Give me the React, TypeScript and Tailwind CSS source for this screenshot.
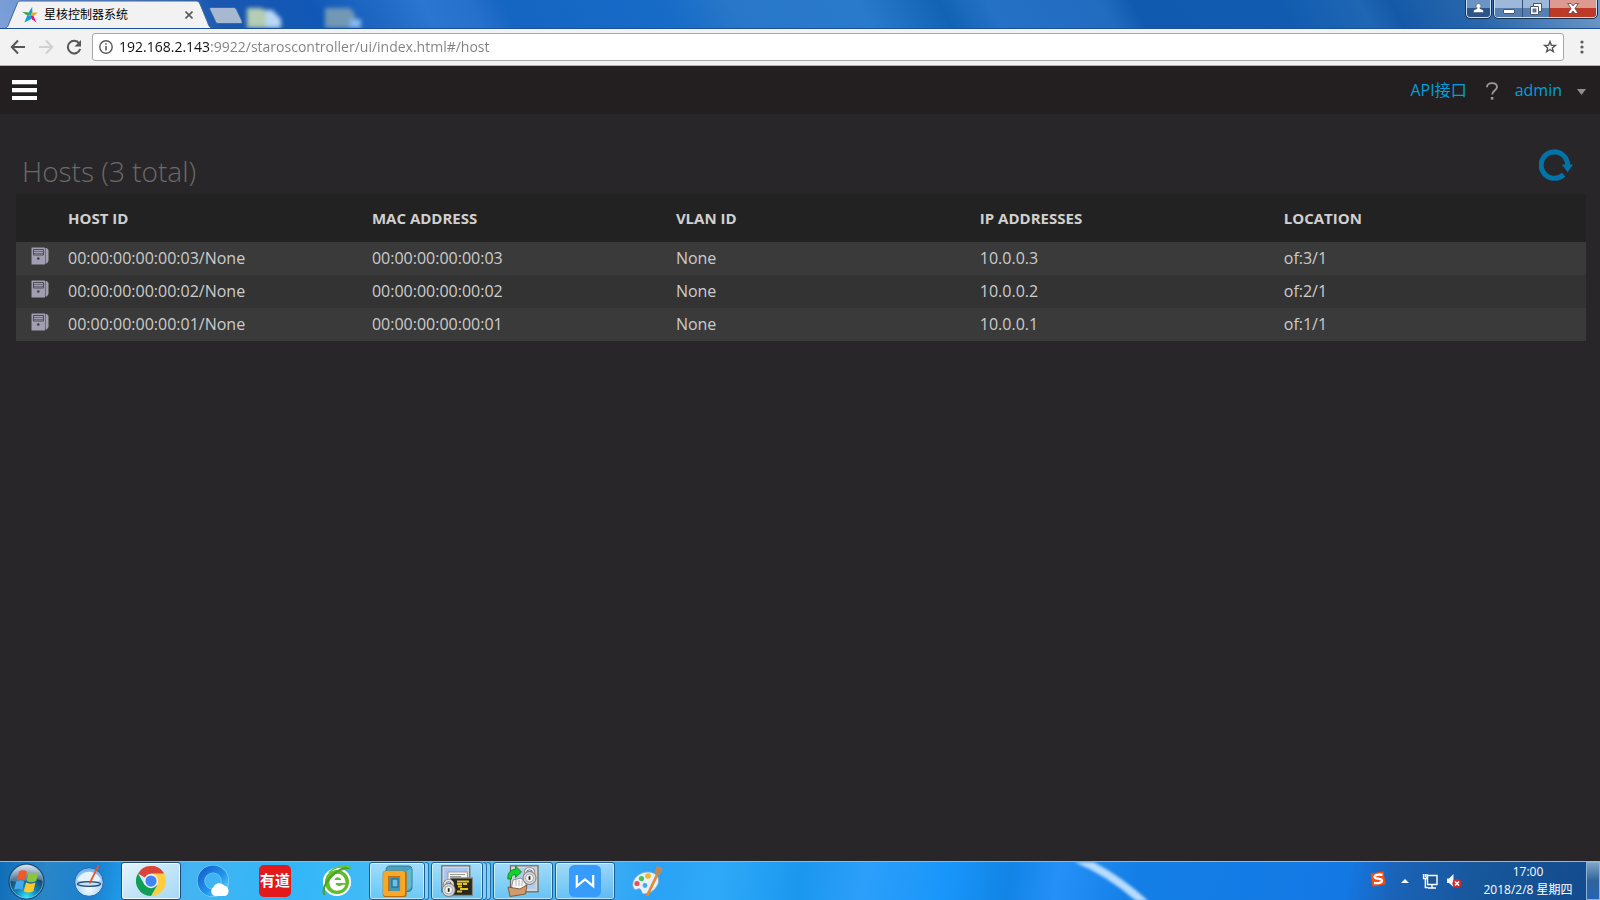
import type { ReactNode } from "react";

const hosts = [
  { id: "00:00:00:00:00:03/None", mac: "00:00:00:00:00:03", vlan: "None", ip: "10.0.0.3", location: "of:3/1" },
  { id: "00:00:00:00:00:02/None", mac: "00:00:00:00:00:02", vlan: "None", ip: "10.0.0.2", location: "of:2/1" },
  { id: "00:00:00:00:00:01/None", mac: "00:00:00:00:00:01", vlan: "None", ip: "10.0.0.1", location: "of:1/1" },
];

const columns = ["HOST ID", "MAC ADDRESS", "VLAN ID", "IP ADDRESSES", "LOCATION"];

function StarLogo() {
  return (
    <svg className="h-4 w-4" viewBox="0 0 16 16" aria-hidden="true">
      <path d="M0 4.8 6.2 5.4 8.2 8.6 5.4 8.4Z" fill="#3f9c35" />
      <path d="M10.2 0 10.4 5.4 8.2 9 6.4 5.4Z" fill="#12a5c9" />
      <path d="M15.8 5.600 10.4 5.600 8.2 8.800 11.600 9Z" fill="#f5a31a" />
      <path d="M14.400 15.400 11.600 9 8.2 8.600 10 12.2Z" fill="#e6157f" />
      <path d="M2.400 15.600 5.2 8.400 8.400 8.400 9.800 11.800Z" fill="#1b9ae0" />
    </svg>
  );
}

function TitleBar() {
  return (
    <div className="relative flex h-[29px] shrink-0 items-start justify-between overflow-hidden border-b border-[#1c4f94] bg-[linear-gradient(62deg,#7da0d8_0%,#5585cb_8%,#1a57b0_14%,#1158b6_20%,#2a76d0_27%,#2570cb_30%,#1565c2_32%,#176cc8_42%,#2877c8_46%,#2a7acb_54%,#1263b4_59%,#2471c6_62%,#226cc0_69%,#105bb0_71%,#115cb0_80%,#1f66b4_85%,#1459a8_87%,#2967ac_92%,#7099c8_100%)]">
      <svg className="absolute left-[236px] top-0 h-7 w-[140px] blur-[2px]" viewBox="0 0 140 28" aria-hidden="true">
        <path d="M26 10h10l9 9v13H26Z" fill="#b9d8f4" />
        <path d="M11 8h15l4 5v18H11Z" fill="#b4cdb4" />
        <path d="M89 8h25l5 6v17H89Z" fill="#7298b6" />
        <path d="M114 19h11v12h-11Z" fill="#86b8ee" />
      </svg>
      <div className="relative flex items-start">
        <div className="relative flex h-7 w-[212px] items-center">
          <svg className="absolute left-0 top-0 h-7 w-[212px]" viewBox="0 0 212 28" aria-hidden="true">
            <path d="M5 28.5C8 27 8 26 10 21L17 4C18 1.500 19 1 21 1H196C198 1 199 2 200 4L207 21C209 26 209 27 212 28.5Z" fill="#f2f2f2" stroke="#41679c" strokeWidth="1" />
          </svg>
          <div className="relative mt-0.5 flex w-full items-center pl-[22px]">
            <StarLogo />
            <span className="ml-1.5 text-[12px] leading-4 text-black">星核控制器系统</span>
            <button aria-label="关闭标签页" className="ml-auto mr-[15px] flex h-4 w-4 items-center justify-center">
              <svg className="h-2 w-2" viewBox="0 0 8 8" aria-hidden="true">
                <path d="M0.500 0.500 7.500 7.500M7.500 0.500 0.500 7.500" stroke="#5a5a5a" strokeWidth="1.6" />
              </svg>
            </button>
          </div>
        </div>
        <button aria-label="打开新的标签页" className="mt-[7px] h-[17px]">
          <svg className="-ml-1 h-[17px] w-[36px]" viewBox="0 0 36 17" aria-hidden="true">
            <path d="M3 .5H25.500C27 .5 28 1.500 28.500 2.500L34 14C34.500 15.500 34 16.500 33 16.500H10C8.500 16.500 8 15.500 7.500 14.500L1.800 2.500C1.400 1.500 2 .5 3 .5Z" fill="#a7b8d1" stroke="#3a66a5" />
          </svg>
        </button>
      </div>
      <div className="relative mr-[3px] flex gap-[3px]">
        <button aria-label="用户" className="flex h-[18px] w-[25px] items-center justify-center rounded-b-[4px] border border-t-0 border-[#cfe0f2] bg-linear-to-b from-[#6b93c4] from-45% to-[#2d5488] to-50% outline outline-[#1b2f4c]">
          <svg className="h-[11px] w-[11px]" viewBox="0 0 11 11" aria-hidden="true">
            <path d="M5.500.5a2.400 2.400 0 0 1 1.300 4.400c0 .8.500 1 1.700 1.300 1.500.4 2 1.200 2 3.300H.5c0-2.100.5-2.900 2-3.300 1.200-.3 1.700-.5 1.700-1.300A2.400 2.400 0 0 1 5.500.5Z" fill="#fff" stroke="#33496b" strokeWidth=".5" />
          </svg>
        </button>
        <div className="flex h-[18px] overflow-hidden rounded-b-[4px] border border-t-0 border-[#cfe0f2] outline outline-[#1b2f4c]">
          <button aria-label="最小化" className="flex w-[28px] items-center justify-center border-r border-[#33507a] bg-linear-to-b from-[#9db8d8] from-45% to-[#567eb0] to-50%">
            <svg className="h-4 w-3" viewBox="0 0 12 16" aria-hidden="true">
              <rect x=".5" y="8.500" width="11" height="4" rx=".5" fill="#fff" stroke="#49576d" />
            </svg>
          </button>
          <button aria-label="向下还原" className="flex w-[27px] items-center justify-center border-r border-[#33507a] bg-linear-to-b from-[#9db8d8] from-45% to-[#567eb0] to-50%">
            <svg className="h-3 w-3" viewBox="0 0 12 12" aria-hidden="true">
              <path d="M3.500.5h8v8h-3v3h-8v-8h3Z" fill="#fff" stroke="#49576d" />
              <path d="M3.500 3.500h5v5" fill="none" stroke="#49576d" />
              <rect x="3" y="6" width="3" height="3" fill="#6787b2" stroke="#49576d" strokeWidth=".8" />
            </svg>
          </button>
          <button aria-label="关闭" className="flex w-[46px] items-center justify-center bg-linear-to-b from-[#dc9a90] from-45% to-[#bd3a26] to-50%">
            <svg className="h-[11px] w-3" viewBox="0 0 12 11" aria-hidden="true">
              <path d="M.7.5H4L6 3 8 .5h3.300L8 5.500l3.300 5H8L6 8l-2 2.500H.7L4 5.500Z" fill="#fff" stroke="#584450" strokeWidth=".8" />
            </svg>
          </button>
        </div>
      </div>
    </div>
  );
}

function AddressBar() {
  return (
    <div className="flex h-[37px] shrink-0 items-center border-b border-[#b3b3b3] bg-[#f2f2f2] pl-[10px]">
      <button aria-label="后退" className="flex w-4 justify-center">
        <svg className="h-4 w-4" viewBox="0 0 16 16" aria-hidden="true">
          <path d="M8 1.500 1.800 8 8 14.500M2 8h13" fill="none" stroke="#555" strokeWidth="2" />
        </svg>
      </button>
      <button aria-label="前进" className="ml-3 flex w-4 justify-center">
        <svg className="h-4 w-4" viewBox="0 0 16 16" aria-hidden="true">
          <path d="M8 1.500 14.200 8 8 14.500M14 8H1" fill="none" stroke="#d0d0d0" strokeWidth="2" />
        </svg>
      </button>
      <button aria-label="重新加载" className="ml-3 flex w-4 justify-center">
        <svg className="h-4 w-4" viewBox="0 0 16 16" aria-hidden="true">
          <path d="M13.300 4.500A6.300 6.300 0 1 0 14.200 10" fill="none" stroke="#555" strokeWidth="2" />
          <path d="M15 1v6.500H8.500Z" fill="#555" />
        </svg>
      </button>
      <div className="ml-[10px] flex h-7 grow items-center rounded-[3px] border border-[#a9a9a9] bg-white pl-[6px] pr-[6px]">
        <svg className="h-[14px] w-[14px] shrink-0" viewBox="0 0 14 14" aria-hidden="true">
          <circle cx="7" cy="7" r="6.200" fill="none" stroke="#5a5a5a" strokeWidth="1.400" />
          <path d="M7 6v4.500M7 3.300v1.500" stroke="#5a5a5a" strokeWidth="1.600" />
        </svg>
        <input
          aria-label="地址栏"
          defaultValue="192.168.2.143:9922/staroscontroller/ui/index.html#/host"
          className="ml-1.5 h-6 min-w-0 grow bg-[linear-gradient(90deg,#111_92px,#808080_92px)] bg-clip-text text-[14px] leading-6 text-transparent outline-none"
        />
        <button aria-label="为此网页添加书签">
          <svg className="h-[14px] w-[14px]" viewBox="0 0 14 14" aria-hidden="true">
            <path d="M7 1.500 8.400 5.300l4 .1-3.100 2.500 1.100 3.900L7 9.500l-3.400 2.300 1.100-3.900L1.600 5.400l4-.1Z" fill="none" stroke="#505050" strokeWidth="1.300" />
          </svg>
        </button>
      </div>
      <button aria-label="自定义及控制" className="flex w-9 justify-center">
        <svg className="h-[14px] w-1" viewBox="0 0 4 14" aria-hidden="true">
          <circle cx="2" cy="2" r="1.600" fill="#5a5a5a" />
          <circle cx="2" cy="7" r="1.600" fill="#5a5a5a" />
          <circle cx="2" cy="12" r="1.600" fill="#5a5a5a" />
        </svg>
      </button>
    </div>
  );
}

function AppHeader() {
  return (
    <header className="flex h-12 shrink-0 items-center justify-between bg-[#231f20] pl-3 pr-[14px]">
      <button aria-label="菜单">
        <svg className="h-5 w-[25px]" viewBox="0 0 25 20" aria-hidden="true">
          <path d="M0 0h25v4H0ZM0 8h25v4H0ZM0 16h25v4H0Z" fill="#fff" />
          <path d="M0 4h25v1H0ZM0 12h25v1H0Z" fill="#5d5b5c" />
        </svg>
      </button>
      <nav className="flex items-center text-[16px] leading-6 text-[#009fdb]">
        <a href="#/api">API接口</a>
        <a href="#/help" aria-label="帮助" className="ml-[18px]">
          <svg className="mt-0.5 h-[18px] w-[14px]" viewBox="0 0 14 18" aria-hidden="true">
            <path d="M2 5.200C2 2.500 4 1.200 7 1.200s5 1.400 5 3.900c0 3.300-4.800 3.600-4.800 7.400" fill="none" stroke="#9a9a9a" strokeWidth="1.800" />
            <rect x="5.800" y="15" width="2.600" height="2.600" fill="#9a9a9a" />
          </svg>
        </a>
        <button className="ml-4 flex items-center">
          admin
          <svg className="ml-[15px] mt-[3px] h-[6px] w-[9px]" viewBox="0 0 9 6" aria-hidden="true">
            <path d="M0 0h9L4.500 6Z" fill="#8f8f8f" />
          </svg>
        </button>
      </nav>
    </header>
  );
}

function HostIcon() {
  return (
    <svg className="h-[18px] w-[18px]" viewBox="0 0 18 18" aria-hidden="true">
      <path d="M14.500 1h1.300L17.500 3v11l-1.700 2.500h-1.300Z" fill="#a19fb0" />
      <rect x=".5" y=".5" width="13.500" height="17" rx=".5" fill="#a09eb0" />
      <path d="M2.500 2.500h10v5.500h-10Z" fill="none" stroke="#4c4b55" strokeWidth="1" />
      <path d="M3 4.500h9M3 6.500h9" stroke="#5e5d68" strokeWidth=".8" />
      <circle cx="7.300" cy="11.500" r="1.200" fill="#3a3940" />
    </svg>
  );
}

function HostView() {
  return (
    <main className="grow bg-[#282629] pb-8 pl-4 pr-[14px] pt-[34px]">
      <div className="flex h-[46px] items-start justify-between pl-[6px] pr-[13px]">
        <h2 className="text-[28px] font-light leading-[46px] text-[#6c6a67]">Hosts (3 total)</h2>
        <button aria-label="刷新">
          <svg className="h-[34px] w-[34px]" viewBox="0 0 34 34" aria-hidden="true">
            <path d="M24.600 26.600A13.200 13.200 0 1 1 28.600 17.500" fill="none" stroke="#0073a8" strokeWidth="5" />
            <path d="M22.800 16.400H34L28.700 24.300Z" fill="#0073a8" />
          </svg>
        </button>
      </div>
      <table className="w-full table-fixed border-collapse text-[16px] leading-[22px] text-[#ccc]">
        <colgroup>
          <col className="w-[42px]" />
          <col className="w-[19.36%]" />
          <col className="w-[19.36%]" />
          <col className="w-[19.36%]" />
          <col className="w-[19.36%]" />
          <col />
        </colgroup>
        <thead>
          <tr className="h-12 bg-[#222]">
            <td />
            {columns.map((name) => (
              <th key={name} scope="col" className="px-[10px] text-left text-[15px] font-bold text-[#d0d0d0]">
                {name}
              </th>
            ))}
          </tr>
        </thead>
        <tbody>
          {hosts.map((host) => (
            <tr key={host.id} className="h-[33px] bg-[#3a3a3a] even:bg-[#333]">
              <td className="pl-[15px] pt-[5px] align-top">
                <HostIcon />
              </td>
              <td className="px-[10px] pb-0.5">{host.id}</td>
              <td className="px-[10px] pb-0.5">{host.mac}</td>
              <td className="px-[10px] pb-0.5">{host.vlan}</td>
              <td className="px-[10px] pb-0.5">{host.ip}</td>
              <td className="px-[10px] pb-0.5">{host.location}</td>
            </tr>
          ))}
        </tbody>
      </table>
    </main>
  );
}

function StartOrb() {
  return (
    <svg className="h-[37px] w-[37px]" viewBox="0 0 37 37" aria-hidden="true">
      <defs>
        <radialGradient id="orb" cx="50%" cy="95%" r="85%">
          <stop offset="0" stopColor="#35e6ff" />
          <stop offset=".35" stopColor="#1288bd" />
          <stop offset=".75" stopColor="#16466f" />
          <stop offset="1" stopColor="#5a7f9e" />
        </radialGradient>
        <linearGradient id="orbShine" x2="0" y2="1">
          <stop offset="0" stopColor="#fff" stopOpacity=".75" />
          <stop offset="1" stopColor="#cfe0ee" stopOpacity=".25" />
        </linearGradient>
      </defs>
      <circle cx="18.500" cy="18.500" r="17.500" fill="url(#orb)" stroke="#0c3d63" />
      <circle cx="18.500" cy="18.500" r="16.500" fill="none" stroke="#9ecbe6" strokeOpacity=".6" />
      <path d="M2.500 18A16 16 0 0 1 34.500 18C26 13 14 21 2.500 18Z" fill="url(#orbShine)" />
      <path d="M11 8.500c3-1.600 5.500-1.600 8 0l-2 8.500c-2.500-1.500-5-1.500-8.200 0Z" fill="#f0592a" />
      <path d="M20.500 9.500c3 1.500 6 1.500 10-.5l-2.300 9c-3 1.600-6.500 1.600-9.500 0Z" fill="#8cc63e" />
      <path d="M8.200 18.500c3-1.500 5.500-1.500 8 0l-2 8.300c-2.500-1.500-5-1.500-8 0Z" fill="#47a9ea" />
      <path d="M18 19.500c3 1.500 6.500 1.500 9.500 0l-2.200 8.700c-3 1.600-6.500 1.600-9.500 0Z" fill="#ffc928" />
    </svg>
  );
}

function NeedleIcon() {
  return (
    <svg className="h-8 w-8" viewBox="0 0 32 32" aria-hidden="true">
      <defs>
        <radialGradient id="ball" cx="50%" cy="75%" r="70%">
          <stop offset="0" stopColor="#f3fbff" />
          <stop offset=".6" stopColor="#b4dcf8" />
          <stop offset="1" stopColor="#6fb2ea" />
        </radialGradient>
      </defs>
      <circle cx="16" cy="17" r="14.300" fill="url(#ball)" stroke="#2a5fa8" strokeWidth=".9" />
      <path d="M4 15C9 4 23 4 28 15 22 18 10 18 4 15Z" fill="#e4f3fd" />
      <ellipse cx="16" cy="19" rx="11.500" ry="2.400" fill="#c4e2f7" stroke="#1d3f74" strokeWidth="1.200" />
      <path d="M16.500 18.500 25.800 0" stroke="#e8552a" strokeWidth="1.700" />
    </svg>
  );
}

function ChromeIcon() {
  return (
    <svg className="h-[30px] w-[30px]" viewBox="0 0 48 48" aria-hidden="true">
      <path d="M24 24 3.200 12A24 24 0 0 1 44.800 12Z" fill="#db4437" />
      <path d="M24 0A24 24 0 0 1 44.800 12H24Z" fill="#db4437" />
      <path d="M24 12H44.800A24 24 0 0 1 24 48L34.400 30Z" fill="#ffcd40" />
      <path d="M3.200 12A24 24 0 0 0 24 48L34.400 30 13.600 30Z" fill="#0f9d58" />
      <circle cx="24" cy="24" r="11.500" fill="#f1f1f1" />
      <circle cx="24" cy="24" r="9" fill="#4285f4" />
    </svg>
  );
}

function QQBrowserIcon() {
  return (
    <svg className="h-8 w-8" viewBox="0 0 32 32" aria-hidden="true">
      <defs>
        <linearGradient id="ring" x2="1" y2="1">
          <stop offset="0" stopColor="#1462cc" />
          <stop offset=".6" stopColor="#2196ee" />
          <stop offset="1" stopColor="#5fd0ff" />
        </linearGradient>
      </defs>
      <circle cx="16" cy="16" r="12" fill="none" stroke="#8fd6fa" strokeWidth="8" />
      <circle cx="16" cy="16" r="12" fill="none" stroke="url(#ring)" strokeWidth="6.800" />
      <path d="M18 31a5 5 0 0 1-1.500-9 6.500 6.500 0 0 1 10.800-1.500A5.500 5.500 0 0 1 28 31Z" fill="#fff" />
    </svg>
  );
}

function BrowserEIcon() {
  return (
    <svg className="h-8 w-8" viewBox="0 0 32 32" aria-hidden="true">
      <circle cx="16" cy="17" r="12.800" fill="none" stroke="#fff" strokeWidth="2.600" />
      <circle cx="16" cy="17" r="12" fill="#62bd2c" />
      <path d="M8.500 18C9 5.500 24 6 24.500 18H14.500c1 4 5.500 3.500 7 1.800h3C22 28 9 28 8.500 18Z" fill="#fff" />
      <path d="M13.500 15c.6-3.600 6-3.600 6.600 0Z" fill="#62bd2c" />
      <path d="M3.500 30C-1 20 15 2 29.500 3" fill="none" stroke="#4ba326" strokeWidth="2.200" />
      <path d="M29.500 3C25-.5 14 1 8 8" fill="none" stroke="#6ac72f" strokeWidth="1.600" />
    </svg>
  );
}

function VmIcon() {
  return (
    <svg className="h-8 w-8" viewBox="0 0 32 32" aria-hidden="true">
      <defs>
        <linearGradient id="vmBack" x2="1" y2="1">
          <stop offset="0" stopColor="#4fa3b8" />
          <stop offset="1" stopColor="#3a9fc4" />
        </linearGradient>
      </defs>
      <path d="M9 1h18.500C30 1 31 2.500 31 5v17.500c0 2.500-1.500 4-4 4H8C6 26.500 5 25 5 23V5c0-2.500 1.500-4 4-4Z" fill="url(#vmBack)" stroke="#2a7890" />
      <path d="M22 8.500 30.500 3v19L22 29Z" fill="#5bb9d2" />
      <path d="M5 9h17.500v20H5Z" fill="none" stroke="#b96d10" strokeWidth="6.600" strokeLinejoin="round" />
      <path d="M4.600 9h17v20h-17Z" fill="none" stroke="#f7a826" strokeWidth="5" strokeLinejoin="round" transform="translate(0 -.4)" />
      <rect x="8" y="12" width="10.500" height="13.500" fill="#3f97bd" />
      <rect x="11" y="14" width="6" height="8" fill="#6fc0e0" stroke="#226c92" strokeWidth="1.200" />
    </svg>
  );
}

function Padlock() {
  return (
    <>
      <path d="M3.500 8V5.500a4 4 0 0 1 8 0V8" fill="none" stroke="#666" strokeWidth="3.200" />
      <path d="M3.500 8V5.500a4 4 0 0 1 8 0V8" fill="none" stroke="#e4e4e4" strokeWidth="2" />
      <circle cx="7.500" cy="11" r="6.500" fill="#d4d6d6" stroke="#666" strokeWidth=".8" />
      <circle cx="7.500" cy="11" r="4" fill="#f2f2f2" stroke="#999" strokeWidth=".8" />
      <path d="M7.500 9.200v3.600" stroke="#222" strokeWidth="1.800" />
    </>
  );
}

function TerminalIcon() {
  return (
    <svg className="h-8 w-8" viewBox="0 0 32 32" aria-hidden="true">
      <rect x=".8" y=".8" width="28" height="26" fill="#d9d5cf" stroke="#6b6661" strokeWidth="1.200" />
      <rect x="3" y="3" width="23.500" height="21" fill="#a9c6f3" />
      <rect x="7" y="7" width="19.500" height="9" fill="#f5f5f2" stroke="#8d8d8d" strokeWidth=".8" />
      <path d="M9 9.500h15M9 11.500h11" stroke="#9a9a9a" />
      <rect x="9.600" y="13" width="22" height="17.500" fill="#27271f" stroke="#8a867c" strokeWidth="1.400" />
      <path d="M16 16.500h12M16 19h5M22 19h4M17 21.500h4M19 24h8M16 26.500h5" stroke="#e8c51c" strokeWidth="1.800" />
      <g transform="translate(.2 14)">
        <Padlock />
      </g>
    </svg>
  );
}

function TransferIcon() {
  return (
    <svg className="h-8 w-8" viewBox="0 0 32 32" aria-hidden="true">
      <rect x="3.500" y=".8" width="27.500" height="26" fill="#d9d5cf" stroke="#6b6661" strokeWidth="1.200" />
      <rect x="6" y="3" width="22.500" height="21" fill="#b3caf0" />
      <g transform="translate(15 2)">
        <Padlock />
      </g>
      <path d="M.8 14C.5 7 4 4.500 8.500 4.500V1l6 6-6 5.500V9.500C5.500 9.500 4 11 4.500 14Z" fill="#14d12c" stroke="#0a7d18" strokeWidth=".8" />
      <path d="M6 15 14 13l5 6v6H4Z" fill="#f7f7f7" stroke="#777" strokeWidth=".8" />
      <path d="M9 15v6M12 15v6M15 16v5" stroke="#aaa" strokeWidth=".8" />
      <path d="M1 22 13 24l7-4-1.500 9-15.500 2.500Z" fill="#d09a6a" stroke="#7a5030" strokeWidth=".9" />
    </svg>
  );
}

function WpsIcon() {
  return (
    <svg className="h-8 w-8" viewBox="0 0 32 32" aria-hidden="true">
      <rect width="32" height="32" rx="5.500" fill="#379bfb" />
      <path d="M7.800 10v11.200L16 14.500l8.200 6.700V10" fill="none" stroke="#fff" strokeWidth="2.200" />
    </svg>
  );
}

function PaintIcon() {
  return (
    <svg className="h-8 w-8" viewBox="0 0 32 32" aria-hidden="true">
      <path d="M3 24C-2 16 8 6 18 7c9 .5 12 8 8 14-3 5-7 7-12 8-4 .5-3-4-5-5s-4 2-6 0Z" fill="#e7f1fa" stroke="#7da9cf" />
      <circle cx="6" cy="18.500" r="2.600" fill="#ee4e57" />
      <circle cx="10.500" cy="13.500" r="2.600" fill="#4bbf5c" />
      <circle cx="17" cy="11" r="2.800" fill="#f5b52c" />
      <circle cx="14" cy="20.500" r="2.400" fill="#47a9ea" />
      <path d="M16 31 26.500 9" stroke="#e48a32" strokeWidth="2.800" />
      <path d="M24 9C22.500 5 26 4 25 1c3 1.500 6.500 0 6.500 2.500S29.500 9 27.500 10.500Z" fill="#b98a5d" />
    </svg>
  );
}

function YoudaoIcon() {
  return (
    <span className="flex h-8 w-8 items-center justify-center rounded-[5px] bg-[#e3191b] pb-0.5 text-[15px] font-bold leading-[30px] text-white">
      有道
    </span>
  );
}

type TaskState = "idle" | "open" | "active";

function TaskButton({ label, state = "idle", windows = 1, children }: { label: string; state?: TaskState; windows?: number; children: ReactNode }) {
  const frame = {
    idle: "",
    open: "border border-[#1f5d92] bg-linear-to-b from-[#ffffff80] to-[#ffffff2e] shadow-[inset_0_0_0_1px_#ffffff8c]",
    active: "border border-[#1f4d78] bg-linear-to-br from-[#e6f5fd] via-[#c3e5f7] to-[#a5d8f4] shadow-[inset_0_0_0_1px_#ffffffcc]",
  };
  return (
    <button aria-label={label} className="flex h-[38px] w-[60px] items-stretch">
      <span className={`flex grow items-center justify-center rounded-[3px] ${frame[state]}`}>{children}</span>
      {windows > 1 && <span className="w-1 rounded-r-[3px] border border-l-0 border-[#2a6ea6] bg-[#ffffff4d]" />}
      {windows > 2 && <span className="w-1 rounded-r-[3px] border border-l-0 border-[#2a6ea6] bg-[#ffffff4d]" />}
    </button>
  );
}

function Taskbar() {
  return (
    <footer className="relative flex h-[39px] shrink-0 items-stretch overflow-hidden border-t border-[#8fb9da] bg-[linear-gradient(100deg,#0f6db8_0%,#2a86c8_3%,#1a80cc_6%,#1f9cec_8%,#45b4f2_12%,#31b6f8_18%,#4abdf5_26%,#45b4f0_36%,#2aa2f6_41%,#2ea9f8_45%,#1b97ef_50%,#2c9ffa_54%,#1996fb_59%,#1284e6_63%,#2490f8_66%,#137fe6_71%,#1478e4_84%,#1a63b8_87%,#17579c_92%,#134a8c_100%)]">
      <svg className="absolute left-[66%] top-0 h-[39px] w-[110px] blur-[1.5px]" viewBox="0 0 110 39" aria-hidden="true">
        <path d="M14-6C44 5 68 22 92 44" fill="none" stroke="#b8dcff" strokeWidth="8" />
      </svg>
      <div className="relative flex grow items-start">
        <button aria-label="开始" className="flex h-[38px] w-[53px] items-center justify-center">
          <StartOrb />
        </button>
        <div className="ml-[6px] flex gap-0.5">
          <TaskButton label="截图工具"><NeedleIcon /></TaskButton>
          <TaskButton label="Google Chrome" state="active"><ChromeIcon /></TaskButton>
          <TaskButton label="QQ浏览器"><QQBrowserIcon /></TaskButton>
          <TaskButton label="有道"><YoudaoIcon /></TaskButton>
          <TaskButton label="浏览器"><BrowserEIcon /></TaskButton>
          <TaskButton label="虚拟机" state="open" windows={2}><VmIcon /></TaskButton>
          <TaskButton label="终端" state="open" windows={3}><TerminalIcon /></TaskButton>
          <TaskButton label="文件传输" state="open"><TransferIcon /></TaskButton>
          <TaskButton label="WPS" state="open"><WpsIcon /></TaskButton>
          <TaskButton label="画图"><PaintIcon /></TaskButton>
        </div>
      </div>
      <div className="relative flex items-center">
        <button aria-label="输入法" className="mb-1">
          <svg className="h-4 w-4" viewBox="0 0 16 16" aria-hidden="true">
            <path d="M.5 2.500 13.500.2 15.700 13.200 2.500 15.800Z" fill="#f04e12" />
            <path d="M12.500 3.800C9 3 4.500 3.800 4.500 6c0 2.500 7.500.8 7.500 3.600 0 2.400-4.500 3-8 2.200" fill="none" stroke="#fff" strokeWidth="2.300" />
          </svg>
        </button>
        <button aria-label="显示隐藏的图标" className="ml-[15px]">
          <svg className="h-1 w-2" viewBox="0 0 8 4" aria-hidden="true">
            <path d="M0 4 4 0 8 4Z" fill="#fff" />
          </svg>
        </button>
        <button aria-label="网络" className="ml-[13px]">
          <svg className="h-4 w-4" viewBox="0 0 16 16" aria-hidden="true">
            <path d="M5.500 2.500h9.500v9H5.500Z" fill="#1c5794" stroke="#fff" strokeWidth="1.400" />
            <path d="M10 12v2.500M6 15h8" stroke="#fff" strokeWidth="1.400" />
            <path d="M1.500 1v4.500h3.500V1M3.300 1v3M3.300 5v9.500H6" fill="none" stroke="#fff" strokeWidth="1.300" />
          </svg>
        </button>
        <button aria-label="音量" className="ml-2">
          <svg className="h-4 w-4" viewBox="0 0 16 16" aria-hidden="true">
            <path d="M1 5.500h2L7.500 1v13L3 10H1Z" fill="#f2f6fa" />
            <circle cx="11" cy="10.500" r="4.600" fill="#d9262b" />
            <path d="m9 8.500 4 4m0-4-4 4" stroke="#fff" strokeWidth="1.600" />
          </svg>
        </button>
        <div className="w-[124px] pl-2 text-center text-[12px] leading-[18px] text-white">
          <div>17:00</div>
          <div>2018/2/8 星期四</div>
        </div>
        <button aria-label="显示桌面" className="h-[38px] w-[14px] border border-[#8db4d8] bg-linear-to-b from-[#7fa3c6] via-[#2f639b] to-[#2466b4]" />
      </div>
    </footer>
  );
}

export default function App() {
  return (
    <div className="flex min-h-screen flex-col font-['Open_Sans','Noto_Sans_CJK_SC',sans-serif]">
      <TitleBar />
      <AddressBar />
      <AppHeader />
      <HostView />
      <Taskbar />
    </div>
  );
}
